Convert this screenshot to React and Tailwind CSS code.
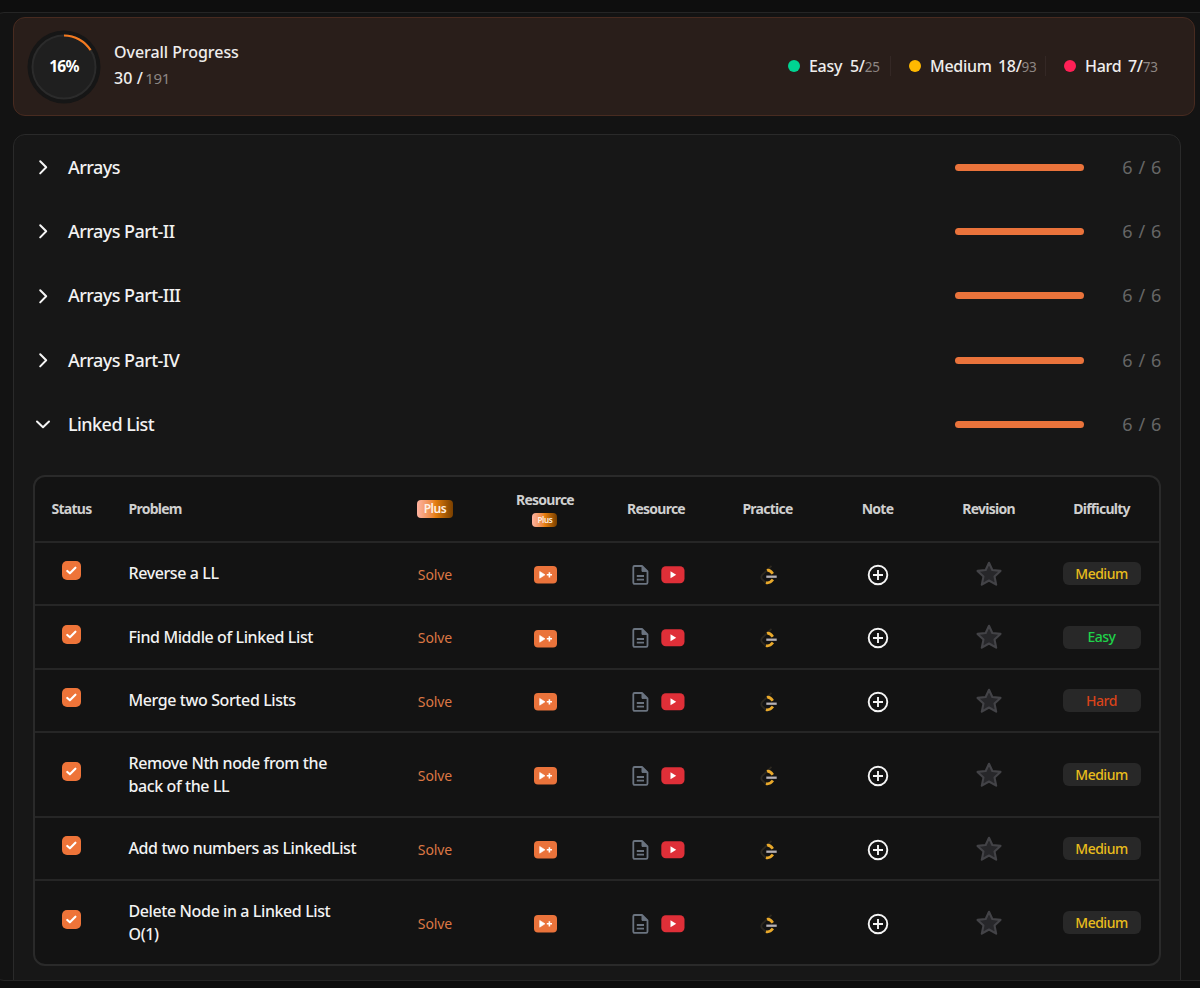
import React from 'react';
import clsx from 'clsx';

const stats = [
  { label: 'Easy', done: 5, total: 25, dot: 'bg-[#00d492]', box: 'w-[102px]', name: 'w-[41px]' },
  { label: 'Medium', done: 18, total: 93, dot: 'bg-[#ffb900]', box: 'w-[155px]', name: 'w-[68px]' },
  { label: 'Hard', done: 7, total: 73, dot: 'bg-[#ff2056]', box: 'w-[112px]', name: 'w-[43px]' },
];

const topics = [
  { title: 'Arrays' },
  { title: 'Arrays Part-II' },
  { title: 'Arrays Part-III' },
  { title: 'Arrays Part-IV' },
  { title: 'Linked List', open: true },
];

const problems = [
  { title: 'Reverse a LL', difficulty: 'Medium', height: 'h-[63px]' },
  { title: 'Find Middle of Linked List', difficulty: 'Easy', height: 'h-[64px]' },
  { title: 'Merge two Sorted Lists', difficulty: 'Hard', height: 'h-[63px]' },
  { title: 'Remove Nth node from the back of the LL', difficulty: 'Medium', height: 'h-[85px]' },
  { title: 'Add two numbers as LinkedList', difficulty: 'Medium', height: 'h-[63px]' },
  { title: 'Delete Node in a Linked List O(1)', difficulty: 'Medium', height: 'h-[83px]' },
];

const difficultyColor = {
  Easy: 'text-[#1fd34a]',
  Medium: 'text-[#e9bd1c]',
  Hard: 'text-[#d9431a]',
};

const columns = 'grid grid-cols-[74px_271px_111px_109px_113px_110px_110px_112px_114px] items-center justify-items-center';

const ProgressRing = () => (
  <svg width="74" height="74" viewBox="0 0 74 74" className="shrink-0">
    <circle cx="37" cy="37" r="36.5" fill="#161616" />
    <circle cx="37" cy="37" r="31.5" fill="#1f1f1f" stroke="#2b2b2b" strokeWidth="2" />
    <path d="M37 5.5A31.5 31.5 0 0 1 63.6 20.2" fill="none" stroke="#f47a20" strokeWidth="2.2" />
  </svg>
);

const Chevron = ({ open }) => (
  <svg width="16" height="16" viewBox="0 0 16 16" fill="none" stroke="#f5f5f5" strokeWidth="2" strokeLinecap="round" strokeLinejoin="round">
    {open ? <path d="M2 5.5 8 11.2 14 5.5" /> : <path d="M5.2 2.2 11.2 8.3 5.2 14.4" />}
  </svg>
);

const Check = () => (
  <div className="flex size-[19px] items-center justify-center rounded-[5px] bg-[#ee7439]">
    <svg width="11" height="9" viewBox="0 0 11 9" fill="none" stroke="#fff" strokeWidth="2.1" strokeLinecap="round" strokeLinejoin="round">
      <path d="M1.3 4.9 3.9 7.3 9.4 1.7" />
    </svg>
  </div>
);

const PlusVideo = () => (
  <svg width="23" height="18" viewBox="0 0 23 18">
    <rect width="23" height="17.5" rx="4" fill="#ea733b" />
    <path d="M5.7 5.4v6.8L11 8.8z" fill="#fff" stroke="#fff" strokeWidth=".6" strokeLinejoin="round" />
    <path d="M15.4 6.2v5.2M12.8 8.8H18" stroke="#fff" strokeWidth="1.6" />
  </svg>
);

const Doc = () => (
  <svg width="17" height="20" viewBox="0 0 17 20" fill="none" stroke="#6b7480" strokeWidth="1.8" strokeLinejoin="round">
    <path d="M2.6 1H10l5.5 5.5v11.1a1.3 1.3 0 0 1-1.3 1.3H2.6a1.3 1.3 0 0 1-1.3-1.3V2.3A1.3 1.3 0 0 1 2.6 1z" />
    <path d="M10 1.2v5.2h5.3z" fill="#6b7480" strokeWidth="1" />
    <path d="M4.8 11h7.2M4.8 14.7h7.2" />
  </svg>
);

const Youtube = () => (
  <svg width="24" height="18" viewBox="0 0 24 18">
    <rect x=".3" y=".3" width="23.2" height="17" rx="4.5" fill="#df2f38" />
    <path d="M9.5 5.3v7l5.7-3.5z" fill="#fff" />
  </svg>
);

const LeetCode = () => (
  <svg width="17" height="20" viewBox="0 0 17 20" fill="none" strokeWidth="2.8">
    <path d="M11.5.8 2 10.2q-1.4 2 0 4l4.6 4.3" stroke="#2c2820" strokeWidth="1.8" />
    <path d="M7 5.4c2.4-.8 4 .8 5.8 3.3" stroke="#e9a92b" />
    <path d="M6 17.6c3 .8 5-.6 6.9-3.1" stroke="#e9a92b" />
    <path d="M6.3 11.7h10.4" stroke="#b5b0b5" strokeWidth="2.3" />
  </svg>
);

const AddNote = () => (
  <svg width="22" height="22" viewBox="0 0 22 22" fill="none" stroke="#f5f5f5" strokeWidth="1.9">
    <circle cx="11" cy="11" r="9.3" />
    <path d="M11 6v10M6 11h10" />
  </svg>
);

const Star = () => (
  <svg width="26" height="26" viewBox="0 0 26 26" fill="#27272a" stroke="#434347" strokeWidth="2.1" strokeLinejoin="round">
    <path d="M13 1.8l3.3 7.2 8.2.9-6 5.5 1.7 8.3L13 19.5l-7.2 4.2 1.7-8.3-6-5.5 8.2-.9z" />
  </svg>
);

const Overall = () => (
  <div className="flex h-[99px] w-[1182px] items-center rounded-xl border border-[#482b20] bg-[#291e1a] pl-[13px]">
    <div className="grid place-items-center *:[grid-area:1/1]">
      <ProgressRing />
      <span className="text-[15.5px] font-bold tracking-[-0.7px] text-white">16%</span>
    </div>
    <div className="ml-[13px] flex flex-col pb-[3px] text-[16px] font-medium leading-[26px] text-[#efedec]">
      <span className="tracking-[-0.05px]">Overall Progress</span>
      <span className="tracking-[0.1px]">
        30 / <span className="-ml-0.5 text-[15px] font-normal tracking-[-0.3px] text-[#8d8683]">191</span>
      </span>
    </div>
    <div className="ml-auto flex items-center pb-px pr-[37px]">
      {stats.map((s, i) => (
        <div
          key={s.label}
          className={clsx('flex h-5 items-center text-[16px] font-medium tracking-[-0.3px] text-[#efedec]', s.box, i > 0 && 'border-l border-[#342825] pl-[18px]')}
        >
          <span className={clsx('mr-[9px] size-3 shrink-0 rounded-full', s.dot)} />
          <span className={clsx('shrink-0', s.name)}>{s.label}</span>
          <span className="whitespace-nowrap">
            {s.done}/<span className="text-[13.5px] font-normal text-[#8d8683]">{s.total}</span>
          </span>
        </div>
      ))}
    </div>
  </div>
);

const TopicRow = ({ title, open }) => (
  <div className="flex h-[64.3px] items-center pl-[21px] pr-[18px]">
    <Chevron open={open} />
    <span className="ml-[17px] text-[18px] font-medium tracking-[-0.55px] text-[#f2f2f2]">{title}</span>
    <div className="ml-auto h-[7px] w-[129px] rounded-full bg-[#ea733b]" />
    <span className="ml-[37px] w-[41px] whitespace-nowrap text-right text-[18px] tracking-[0.6px] text-[#666]">6 / 6</span>
  </div>
);

const PlusBadge = ({ small }) => (
  <span
    className={clsx(
      'flex items-center justify-center bg-linear-to-r from-[#ffb3a0] via-[#e88010] to-[#7a4000] font-semibold text-[#fff0e2]',
      small ? 'h-[14px] w-[25px] rounded-[4px] text-[8px] tracking-[-0.3px]' : 'h-[18px] w-9 rounded-[4px] text-[12px] tracking-[-0.4px]'
    )}
  >
    Plus
  </span>
);

const Header = () => (
  <div className={clsx(columns, 'h-[66px] border-b-2 border-[#262626] text-[14px] font-bold leading-[18px] tracking-[-0.75px] text-[#cfcfcf]')}>
    <span>Status</span>
    <span className="justify-self-start pl-5">Problem</span>
    <PlusBadge />
    <div className="flex flex-col items-center gap-1 pb-px">
      <span>Resource</span>
      <PlusBadge small />
    </div>
    <span>Resource</span>
    <span>Practice</span>
    <span>Note</span>
    <span>Revision</span>
    <span>Difficulty</span>
  </div>
);

const ProblemRow = ({ title, difficulty, height, last }) => (
  <div className={clsx(columns, height, !last && 'border-b-2 border-[#262626]')}>
    <div className="pb-[6px] pr-px">
      <Check />
    </div>
    <span className="w-[252px] justify-self-start pl-5 text-[16px] font-medium leading-[23px] tracking-[-0.4px] text-[#f2f2f2]">
      {title}
    </span>
    <span className="pt-px text-[14px] tracking-[-0.1px] text-[#dc7744]">Solve</span>
    <div className="pt-[3px]">
      <PlusVideo />
    </div>
    <div className="flex items-center gap-3 pl-[4px] pt-[2px]">
      <Doc />
      <Youtube />
    </div>
    <div className="pl-[1px] pt-[2px]">
      <LeetCode />
    </div>
    <div className="pt-[2px]">
      <AddNote />
    </div>
    <Star />
    <span
      className={clsx(
        'flex h-[23px] w-[78px] items-center justify-center rounded-md bg-[#282828] pb-px text-[14px] font-medium tracking-[-0.5px]',
        difficultyColor[difficulty]
      )}
    >
      {difficulty}
    </span>
  </div>
);

const App = () => (
  <div className="h-[988px] w-[1200px] overflow-hidden bg-[#0e0e0e] pt-3 font-['Noto_Sans',sans-serif]">
    <div className="-ml-2 h-[969px] w-[1220px] overflow-hidden rounded-xl border border-[#252525] bg-[#131313] pl-5 pt-1">
      <Overall />
      <div className="mt-[18px] h-[900px] w-[1168px] rounded-xl border border-[#2a2a2a] bg-[#171717]">
        {topics.map((t) => (
          <TopicRow key={t.title} {...t} />
        ))}
        <div className="ml-[18.5px] mt-[19px] w-[1128px] rounded-xl border-2 border-[#2a2a2a] bg-[#131313]">
          <Header />
          {problems.map((p, i) => (
            <ProblemRow key={p.title} {...p} last={i === problems.length - 1} />
          ))}
        </div>
      </div>
    </div>
  </div>
);

export default App;
